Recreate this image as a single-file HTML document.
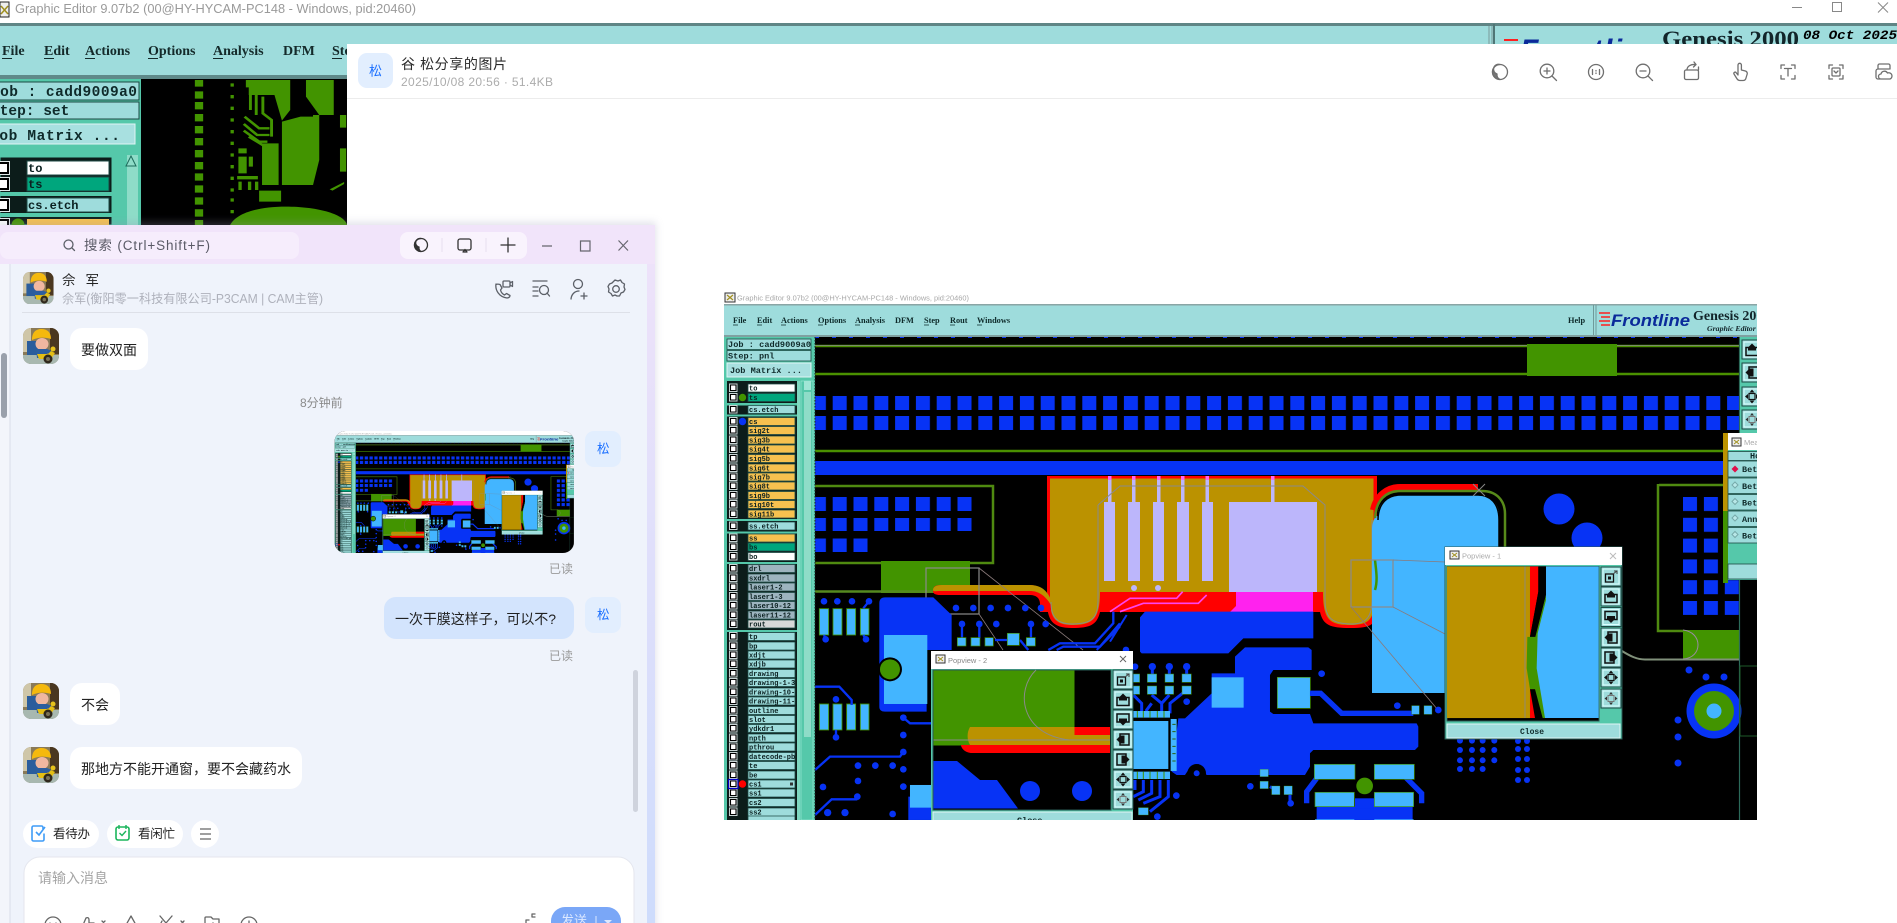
<!DOCTYPE html>
<html lang="zh"><head><meta charset="utf-8"><title>Screenshot</title>
<style>
html,body{margin:0;padding:0;background:#fff;width:1897px;height:923px;overflow:hidden}
svg{display:block}
.s{font-family:"Liberation Sans","Noto Sans CJK SC",sans-serif}
.m{font-family:"Liberation Mono",monospace;font-weight:700}
.f{font-family:"Liberation Serif",serif;font-weight:700}
.ic{fill:none;stroke:#5c6068;stroke-width:1.3;stroke-linecap:round;stroke-linejoin:round}
.vi{fill:none;stroke:#6f6f6f;stroke-width:1.3;stroke-linecap:round;stroke-linejoin:round}
</style></head><body>
<svg xmlns="http://www.w3.org/2000/svg" width="1897" height="923" viewBox="0 0 1897 923">
<defs>
<clipPath id="shotclip"><rect x="723" y="285" width="1034" height="535"/></clipPath>
<clipPath id="thumbclip"><rect x="334.5" y="431" width="239.500" height="122" rx="11"/></clipPath>
<clipPath id="avclip"><rect width="36" height="36" rx="8"/></clipPath>
<clipPath id="chatclip"><rect x="0" y="225" width="660" height="698"/></clipPath>
<clipPath id="tlclip"><rect x="0" y="0" width="1897" height="225"/></clipPath>
<pattern id="sq1" patternUnits="userSpaceOnUse" x="811.9" y="396" width="20.8" height="20"><rect width="14" height="14" fill="#0733f5"/></pattern>
<pattern id="sq2" patternUnits="userSpaceOnUse" x="811.9" y="497" width="20.8" height="20.500"><rect width="14" height="14" fill="#0733f5"/></pattern>
<pattern id="sq3" patternUnits="userSpaceOnUse" x="1683" y="497" width="20.9" height="20.8"><rect width="14" height="14" fill="#0733f5"/></pattern>
<linearGradient id="lil" x1="0" x2="1" y1="0" y2="0"><stop offset="0" stop-color="#f5ecfb"/><stop offset="1" stop-color="#efe2fa"/></linearGradient>
<linearGradient id="edge" x1="0" x2="0" y1="0" y2="1"><stop offset="0" stop-color="#efe2fa"/><stop offset="1" stop-color="#cedcfc"/></linearGradient>
<filter id="sh" x="-5%" y="-5%" width="110%" height="110%"><feGaussianBlur stdDeviation="4"/></filter>

<g id="av">
 <g clip-path="url(#avclip)">
  <rect width="36" height="36" fill="#8a7a58"/>
  <rect x="0" y="0" width="8" height="24" fill="#cfc6a8"/>
  <rect x="27" y="0" width="9" height="26" fill="#4a3720"/>
  <rect x="0" y="27" width="36" height="9" fill="#a8b8b0"/>
  <rect x="4" y="13" width="11" height="14" fill="#2b5d9c"/>
  <ellipse cx="19" cy="16" rx="6.500" ry="6" fill="#f0b7a0"/>
  <path d="M9 12C9 4 13 1 18.500 1S28 4 28 11c-6-2-13-2-19 1z" fill="#f5b90e"/>
  <path d="M13 21h11l5 2-2 3-3-1v5H14z" fill="#2c5e9e"/>
  <path d="M14 26h11l3-3 4 2-4 6H16z" fill="#e4be14"/>
  <circle cx="25" cy="31" r="4.500" fill="#2f281c"/><circle cx="25" cy="31" r="2" fill="#7a7258"/>
  <circle cx="30" cy="21" r="2.500" fill="#e6c21c"/>
 </g>
</g>

<g id="b1"><rect width="20" height="19" fill="#9edcdc" stroke="#1d4a44"/><rect x="2" y="2" width="16" height="15" fill="none" stroke="#dff"/><rect x="4.500" y="7" width="8" height="8" fill="none" stroke="#111" stroke-width="1.300"/><rect x="7" y="9.500" width="3" height="3" fill="#111"/><path d="M12 7l4-3M13 4h3v3" fill="none" stroke="#444"/></g>
<g id="b2"><rect width="20" height="19" fill="#9edcdc" stroke="#1d4a44"/><rect x="2" y="2" width="16" height="15" fill="none" stroke="#dff"/><rect x="4" y="7.500" width="12" height="8" fill="none" stroke="#111" stroke-width="1.500"/><path d="M10 3.500l4 4v3H6v-3z" fill="#111"/></g>
<g id="b3"><rect width="20" height="19" fill="#9edcdc" stroke="#1d4a44"/><rect x="2" y="2" width="16" height="15" fill="none" stroke="#dff"/><rect x="4" y="4" width="12" height="8" fill="none" stroke="#111" stroke-width="1.500"/><path d="M10 15.500l-4-4v-3h8v3z" fill="#111"/></g>
<g id="b4"><rect width="20" height="19" fill="#9edcdc" stroke="#1d4a44"/><rect x="2" y="2" width="16" height="15" fill="none" stroke="#dff"/><rect x="7" y="4" width="9" height="11" fill="none" stroke="#111" stroke-width="1.500"/><path d="M3.500 9.500l4-4h4v8h-4z" fill="#111"/></g>
<g id="b5"><rect width="20" height="19" fill="#9edcdc" stroke="#1d4a44"/><rect x="2" y="2" width="16" height="15" fill="none" stroke="#dff"/><rect x="4" y="4" width="9" height="11" fill="none" stroke="#111" stroke-width="1.500"/><path d="M16.500 9.500l-4-4h-4v8h4z" fill="#111"/></g>
<g id="b6"><rect width="20" height="19" fill="#9edcdc" stroke="#1d4a44"/><rect x="2" y="2" width="16" height="15" fill="none" stroke="#dff"/><rect x="7" y="6.500" width="6" height="6" fill="none" stroke="#111" stroke-width="1.200"/><path d="M10 2.500l2.500 3h-5zM10 16.500l2.500-3h-5zM3 9.500l3-2.500v5zM17 9.500l-3-2.500v5z" fill="#111"/></g>
<g id="b7"><rect width="20" height="19" fill="#9edcdc" stroke="#1d4a44"/><rect x="2" y="2" width="16" height="15" fill="none" stroke="#dff"/><rect x="7" y="6.500" width="6" height="6" fill="none" stroke="#777"/><path d="M10 3l2 2.500h-4zM10 16l2-2.500H8zM3.500 9.500l2.500-2v4zM16.500 9.500l-2.500-2v4z" fill="#333"/></g>

<path id="cb" d="M730.500 385h5.500v5.500h-5.500zM730.500 394.500h5.500v5.500h-5.500zM730.500 406.500h5.500v5.500h-5.500zM730.500 418.500h5.500v5.500h-5.500zM730.500 427.500h5.500v5.500h-5.500zM730.500 437h5.500v5.500h-5.500zM730.500 446h5.500v5.500h-5.500zM730.500 455.500h5.500v5.500h-5.500zM730.500 465h5.500v5.500h-5.500zM730.500 474h5.500v5.500h-5.500zM730.500 483h5.500v5.500h-5.500zM730.500 492.500h5.500v5.500h-5.500zM730.500 501.500h5.500v5.500h-5.500zM730.500 511h5.500v5.500h-5.500zM730.500 523h5.500v5.500h-5.500zM730.500 535h5.500v5.500h-5.500zM730.500 544h5.500v5.500h-5.500zM730.500 553.500h5.500v5.500h-5.500zM730.500 565.500h5.500v5.500h-5.500zM730.500 575h5.500v5.500h-5.500zM730.500 584h5.500v5.500h-5.500zM730.500 593.500h5.500v5.500h-5.500zM730.500 602.500h5.500v5.500h-5.500zM730.500 612h5.500v5.500h-5.500zM730.500 621h5.500v5.500h-5.500zM730.500 633.500h5.500v5.500h-5.500zM730.500 643h5.500v5.500h-5.500zM730.500 652h5.500v5.500h-5.500zM730.500 661h5.500v5.500h-5.500zM730.500 670.500h5.500v5.500h-5.500zM730.500 679.500h5.500v5.500h-5.500zM730.500 689h5.500v5.500h-5.500zM730.500 698h5.500v5.500h-5.500zM730.500 707.500h5.500v5.500h-5.500zM730.500 716.500h5.500v5.500h-5.500zM730.500 725.500h5.500v5.500h-5.500zM730.500 735h5.500v5.500h-5.500zM730.500 744h5.500v5.500h-5.500zM730.500 753.500h5.500v5.500h-5.500zM730.500 762.500h5.500v5.500h-5.500zM730.500 772h5.500v5.500h-5.500zM730.500 781h5.500v5.500h-5.500zM730.500 790h5.500v5.500h-5.500zM730.500 799.500h5.500v5.500h-5.500zM730.500 809h5.500v5.500h-5.500z"/>

<!-- ================= central screenshot ================= -->
<g id="shot">
 <rect x="723" y="285" width="1034" height="535" fill="#fff"/>
 <rect x="725" y="293" width="10" height="9" fill="#eee" stroke="#333"/><path d="M727 295l6 5M733 295l-6 5" stroke="#a09020" stroke-width="1.200"/>
 <text class="s" x="737" y="300.500" font-size="7.500" fill="#a8a8a8" textLength="232" lengthAdjust="spacingAndGlyphs">Graphic Editor 9.07b2 (00@HY-HYCAM-PC148 - Windows, pid:20460)</text>
 <rect x="724" y="304" width="1033" height="516" fill="#000"/>
 <rect x="724" y="304" width="1033" height="32" fill="#9edcdc"/>
 <rect x="724" y="304" width="1033" height="1.500" fill="#8aa5a5"/><rect x="724" y="335" width="1033" height="2" fill="#7fa0a0"/>
 <g class="f" font-size="8.300" fill="#0d2a2a">
  <text x="733" y="323">File</text><text x="757" y="323">Edit</text><text x="781" y="323">Actions</text><text x="818" y="323">Options</text><text x="855" y="323">Analysis</text><text x="895" y="323">DFM</text><text x="924" y="323">Step</text><text x="950" y="323">Rout</text><text x="977" y="323">Windows</text>
  <text x="1568" y="323">Help</text>
 </g>
 <path d="M733 325h5M757 325h5M781 325h5M818 325h5M855 325h5M924 325h5M950 325h5M977 325h5" stroke="#0d2a2a" stroke-width=".8"/>
 <path d="M1593.500 305v30M1596 305v30" stroke="#6f9a9a" fill="none"/>
 <path d="M1599 313h11M1601 317h9M1599 321h11M1601 325h9" stroke="#ff2020" stroke-width="1.500"/>
 <text x="1611" y="326" font-family="Liberation Sans,sans-serif" font-weight="700" font-style="italic" font-size="17" fill="#0a2a9a" textLength="79" lengthAdjust="spacingAndGlyphs">Frontline</text>
 <text class="f" x="1693" y="320" font-size="14" fill="#12252a">Genesis 2000</text>
 <text class="f" x="1707" y="331" font-size="7.800" font-style="italic" fill="#12252a">Graphic Editor</text>

 <!-- PCB canvas -->
 <path d="M815 337.500H1740" stroke="#0733f5" stroke-width="1" stroke-dasharray="4 13"/>
 <path d="M815 346H1740M815 374H1740" stroke="#4a9000" stroke-width="2.500"/>
 <path d="M815 345.500H1740" stroke="#8a8a8a" stroke-width=".7"/>
 <rect x="1527" y="344" width="90" height="32" fill="#429400"/>
 <rect x="815" y="396" width="925" height="34" fill="url(#sq1)"/>
 <path d="M815 451H1740" stroke="#4a9000" stroke-width="2.500"/>
 <rect x="815" y="461" width="908" height="14" fill="#0733f5"/>

 <!-- left green box -->
 <path d="M815 486H993V563H815" fill="none" stroke="#4f8a10" stroke-width="2.500"/>
 <rect x="815" y="497" width="158" height="34" fill="url(#sq2)"/>
 <rect x="815" y="538" width="53" height="14" fill="url(#sq2)"/>
 <rect x="881" y="561" width="89" height="32" fill="#429400"/>
 <path d="M815 591.500H1040" stroke="#568a20" stroke-width="2.500"/>

 <!-- gold block -->
 <path d="M1047 476H1377V606C1377 625 1372 628 1350 628 1330 628 1323 625 1320 612H1100C1097 625 1090 628 1072 628 1052 628 1047 620 1047 600z" fill="#ff0000"/>
 <path d="M1050 478.500H1373.500V604C1373.500 620 1368 625 1350 625 1330 625 1323 620 1323 592H1100C1100 620 1092 625 1072 625 1056 625 1050 618 1050 600z" fill="#bb9200"/>
 <path d="M1230 592H1313V612H1230z" fill="#ff22ee"/><path d="M1230 592H1236V606L1230 612z" fill="#ff0000"/>
 <path d="M933 591C933 586 936 585 942 585H1030C1042 585 1051 595 1051 605V612H1040V604C1040 598 1036 595 1030 595H940C936 595 933 594 933 591z" fill="#ff0000"/>
 <path d="M933 590C933 587 936 585 942 585H1030C1042 585 1048 592 1051 600V605C1045 595 1038 591 1030 591H940C936 591 933 592 933 590z" fill="#bb9200"/>
 <path d="M1100 592H1231L1228 600 1218 612H1100z" fill="#ff0000"/>
 <g fill="#bcb6fb">
  <rect x="1104" y="502" width="11" height="79"/><rect x="1128" y="502" width="12" height="79"/><rect x="1153" y="502" width="11" height="79"/><rect x="1177" y="502" width="12" height="79"/><rect x="1202" y="502" width="11" height="79"/>
  <rect x="1229" y="502" width="88" height="90"/>
  <rect x="1108" y="480" width="3.500" height="22"/><rect x="1132" y="480" width="3.500" height="22"/><rect x="1157" y="480" width="3.500" height="22"/><rect x="1181" y="480" width="3.500" height="22"/><rect x="1205.500" y="480" width="3.500" height="22"/><rect x="1271" y="480" width="3.500" height="22"/>
  <circle cx="1134" cy="588" r="3"/><circle cx="1158" cy="588" r="3"/>
 </g>
 <path d="M1108 476h3.500v4h-3.500zM1132 476h3.500v4h-3.500zM1157 476h3.500v4h-3.500zM1181 476h3.500v4h-3.500zM1205.500 476h3.500v4h-3.500zM1271 476h3.500v4h-3.500z" fill="#ff66ee"/>
 <path d="M1098 505L1120 486H1303L1325 505V600C1325 618 1332 624 1352 624 1368 624 1372 614 1372 600V520M1098 505V600C1098 618 1092 624 1072 624 1056 624 1051 616 1051 602" fill="none" stroke="#8a8a8a" stroke-width="1"/>
 <g transform="translate(1110,540) scale(.3333)">
  <path d="M0 215L60 175H200L218 155M30 215L100 190H265L290 165" fill="none" stroke="#ff44ee" stroke-width="5"/>
  <path d="M0 305L50 225M-40 330L30 260" fill="none" stroke="#0733f5" stroke-width="6"/>
  <path d="M90 232L105 215H610V295H400L355 340H95L90 335z" fill="#0733f5"/>
  <path d="M375 350L405 322H595L605 330V390H490L480 405V515L490 522H600L610 550H920L925 560V620L915 630H610L600 640V680L585 705H290L265 672 235 690 225 705H200L185 695 205 535H225L305 460V400H375z" fill="#0733f5"/>
  <circle cx="260" cy="700" r="28" fill="#000"/><circle cx="260" cy="700" r="9" fill="#0733f5"/>
  <rect x="305" y="412" width="96" height="91" fill="#43b5ff"/>
  <rect x="502" y="412" width="99" height="93" fill="#43b5ff" stroke="#429400" stroke-width="2"/>
  <path d="M600 460H632L695 520H910" fill="none" stroke="#0733f5" stroke-width="16"/>
 </g>

 <!-- big light blue pad + outlines -->
 <path d="M1372 693V530C1372 520 1378 510 1378 520V515C1378 503 1388 495 1400 495H1478C1490 495 1499 503 1499 515V560H1445V693z" fill="#43b5ff"/>
 <path d="M1373 510C1376 495 1388 487 1400 487H1478" fill="none" stroke="#ff0000" stroke-width="6"/>
 <path d="M1375 518C1376 500 1386 491 1400 491H1482C1496 491 1505 500 1505 514V550" fill="none" stroke="#578a1a" stroke-width="2.500"/>
 <path d="M1378 520C1378 503 1388 495 1400 495H1478C1490 495 1499 503 1499 520V550" fill="none" stroke="#000" stroke-width="1.500"/>
 <path d="M1473 484l12 12M1485 484l-12 12" stroke="#888"/>
 <path d="M1375 590C1378 580 1376 570 1375 560" stroke="#429400" stroke-width="2.500" fill="none"/>
 <circle cx="1559" cy="509" r="15.500" fill="#0733f5"/><circle cx="1587" cy="538" r="15.500" fill="#0733f5"/>
 <!-- zoom rectangles -->
 <rect x="926" y="568" width="53" height="46" fill="none" stroke="#8a8a8a" stroke-width="1.200"/>
 <rect x="1351" y="560" width="42" height="47" fill="none" stroke="#8a8a8a" stroke-width="1.200"/>
 <path d="M979 568L1083 650M979 614L1003 650M1393 560L1445 562M1393 607L1445 634M1351 607L1438 710" fill="none" stroke="#8a7a7a" stroke-width=".8"/>

 <!-- bottom left blue detail -->
 <g transform="translate(720,540) scale(.3333)">
  <path d="M478 190Q478 172 495 172H640L695 225V330H620V515H495Q478 515 478 500z" fill="#0733f5"/>
  <rect x="492" y="285" width="130" height="207" fill="#43b5ff"/>
  <circle cx="510" cy="388" r="36" fill="#000"/><circle cx="510" cy="388" r="30" fill="#429400"/>
  <g fill="#43b5ff" stroke="#429400" stroke-width="2.500"><rect x="298" y="206" width="28" height="79"/><rect x="339" y="206" width="27" height="79"/><rect x="380" y="206" width="27" height="79"/><rect x="421" y="206" width="26" height="79"/><rect x="298" y="492" width="28" height="78"/><rect x="339" y="492" width="27" height="78"/><rect x="380" y="492" width="27" height="78"/><rect x="421" y="492" width="26" height="78"/></g>
  <g fill="#0733f5"><circle cx="312" cy="184" r="10"/><circle cx="352" cy="184" r="10"/><circle cx="396" cy="184" r="10"/><circle cx="447" cy="184" r="10"/><circle cx="317" cy="298" r="10"/><circle cx="438" cy="298" r="10"/><circle cx="348" cy="478" r="10"/><circle cx="348" cy="592" r="10"/>
  <circle cx="550" cy="533" r="10"/><circle cx="550" cy="585" r="10"/><circle cx="550" cy="636" r="10"/><circle cx="550" cy="688" r="10"/><circle cx="550" cy="740" r="10"/><circle cx="414" cy="677" r="10"/><circle cx="466" cy="677" r="10"/><circle cx="518" cy="677" r="10"/><circle cx="414" cy="723" r="10"/><circle cx="412" cy="770" r="10"/><circle cx="309" cy="741" r="10"/><circle cx="323" cy="818" r="11"/><circle cx="375" cy="818" r="11"/><circle cx="518" cy="822" r="10"/>
  <circle cx="708" cy="204" r="10"/><circle cx="760" cy="204" r="10"/><circle cx="812" cy="204" r="10"/><circle cx="864" cy="204" r="10"/><circle cx="916" cy="204" r="10"/><circle cx="963" cy="204" r="10"/><circle cx="726" cy="252" r="10"/><circle cx="778" cy="252" r="10"/><circle cx="829" cy="252" r="10"/><circle cx="933" cy="252" r="10"/><circle cx="977" cy="252" r="10"/></g>
  <path d="M285 690L330 650H540L550 636M550 533L570 550H640M285 825L335 778H412M285 440H358L395 480V495M447 184L430 205M312 285L317 298M430 285L438 298M348 570V592M726 252V295M778 252V295M933 252V295M825 300H870M900 300L925 330M985 330L1020 310H1125L1180 250V215M1010 330L1030 320H1140L1200 250" fill="none" stroke="#0733f5" stroke-width="7"/>
  <g fill="#43b5ff" stroke="#429400" stroke-width="2"><rect x="712" y="293" width="26" height="25"/><rect x="753" y="293" width="27" height="25"/><rect x="795" y="293" width="25" height="25"/><rect x="919" y="293" width="27" height="25"/><rect x="862" y="280" width="36" height="36"/></g>
  <rect x="565" y="770" width="70" height="70" fill="#0733f5"/><rect x="570" y="735" width="65" height="68" fill="#43b5ff"/>
 </g>

 <!-- centre-bottom detail -->
 <g transform="translate(1110,540) scale(.3333)">
  <g fill="#0733f5"><circle cx="48" cy="330" r="10"/><circle cx="75" cy="380" r="10"/><circle cx="127" cy="380" r="11"/><circle cx="178" cy="380" r="11"/><circle cx="230" cy="380" r="11"/><circle cx="230" cy="485" r="10"/><circle cx="635" cy="401" r="10"/><circle cx="862" cy="497" r="10"/><circle cx="985" cy="510" r="10"/><circle cx="421" cy="739" r="10"/><circle cx="199" cy="767" r="10"/><circle cx="142" cy="830" r="10"/><circle cx="542" cy="790" r="10"/></g>
  <path d="M127 380V405M178 380V405M230 380V405M70 465L95 490V520M125 465L155 490V520M178 465L155 490M230 450L180 490V520M125 490L110 510V520M75 720V750M100 720V755L70 770M125 720V760L85 780M150 720V770L100 790M175 720V770L120 815M540 765V790M480 740L497 750" fill="none" stroke="#0733f5" stroke-width="9"/>
  <g fill="#43b5ff" stroke="#429400" stroke-width="1.500"><rect x="65" y="402" width="24" height="25"/><rect x="112" y="402" width="28" height="25"/><rect x="165" y="402" width="26" height="25"/><rect x="216" y="402" width="28" height="25"/><rect x="65" y="438" width="24" height="25"/><rect x="112" y="438" width="28" height="25"/><rect x="165" y="438" width="26" height="25"/><rect x="216" y="438" width="28" height="25"/></g>
  <rect x="70" y="543" width="105" height="144" fill="#43b5ff"/>
  <path d="M70 513h110v20H70zM70 695h110v22H70z" fill="#43b5ff"/>
  <path d="M82 513v20M100 513v20M120 513v20M142 513v20M162 513v20M82 695v22M100 695v22M120 695v22M142 695v22M162 695v22" stroke="#429400" stroke-width="3"/>
  <rect x="182" y="537" width="18" height="156" fill="#43b5ff"/>
  <path d="M187 553h10M187 575h10M187 597h10M187 619h10M187 641h10M187 663h10" stroke="#2c6010" stroke-width="3"/>
  <path d="M450 688h25v22h-25zM450 724h25v22h-25zM485 738h25v26h-25zM522 738h25v26h-25zM905 497h23v26h-23zM942 497h24v26h-24zM85 803h30v22H85z" fill="#43b5ff" stroke="#429400" stroke-width="1"/>
  <rect x="620" y="800" width="288" height="40" fill="#0733f5"/><rect x="735" y="775" width="58" height="30" fill="#0733f5"/>
  <path d="M590 790V755L620 715M935 790V760L885 710" fill="none" stroke="#0733f5" stroke-width="16"/>
  <g fill="#43b5ff" stroke="#429400" stroke-width="2"><rect x="613" y="673" width="122" height="45"/><rect x="793" y="673" width="120" height="45"/><rect x="615" y="757" width="118" height="43"/><rect x="793" y="757" width="118" height="43"/></g>
  <circle cx="764" cy="738" r="25" fill="#429400"/>
  <rect x="615" y="838" width="118" height="4" fill="#43b5ff"/><rect x="793" y="838" width="118" height="4" fill="#43b5ff"/>
  <g fill="#0733f5"><circle cx="1050" cy="602" r="9"/><circle cx="1086" cy="602" r="9"/><circle cx="1118" cy="602" r="9"/><circle cx="1153" cy="602" r="9"/><circle cx="1050" cy="630" r="9"/><circle cx="1086" cy="630" r="9"/><circle cx="1118" cy="630" r="9"/><circle cx="1153" cy="630" r="9"/><circle cx="1050" cy="661" r="9"/><circle cx="1086" cy="661" r="9"/><circle cx="1118" cy="661" r="9"/><circle cx="1153" cy="661" r="9"/><circle cx="1050" cy="687" r="9"/><circle cx="1086" cy="687" r="9"/><circle cx="1118" cy="687" r="9"/></g>
 </g>

 <!-- right-hand region -->
 <path d="M1659 485H1724M1658 484V631H1683" fill="none" stroke="#4f8a10" stroke-width="2.500"/>
 <rect x="1683" y="497" width="57" height="118" fill="url(#sq3)"/>
 <rect x="1683" y="630" width="57" height="29.500" fill="#429400"/>
 <path d="M1622 651C1630 656 1637 659.500 1645 659.500H1739" fill="none" stroke="#80907a" stroke-width="2"/>
 <path d="M1683 630C1703 632 1703 658 1683 659" fill="none" stroke="#9a8ca0" stroke-width="1"/>
 <circle cx="1714" cy="711" r="27.500" fill="#0733f5"/><circle cx="1714" cy="711" r="20" fill="#429400"/><circle cx="1714" cy="711" r="7.500" fill="#43b5ff"/>
 <g fill="#0733f5"><circle cx="1689" cy="670" r="3.500"/><circle cx="1706" cy="677" r="3.500"/><circle cx="1724" cy="677" r="3.500"/><circle cx="1678" cy="720" r="3.500"/><circle cx="1678" cy="737" r="3.500"/><circle cx="1678" cy="763" r="3.500"/>
 <circle cx="1518" cy="741" r="3"/><circle cx="1527" cy="741" r="3"/><circle cx="1518" cy="749" r="3"/><circle cx="1527" cy="749" r="3"/><circle cx="1518" cy="759" r="3"/><circle cx="1527" cy="759" r="3"/><circle cx="1518" cy="770" r="3"/><circle cx="1527" cy="770" r="3"/><circle cx="1518" cy="780" r="3"/><circle cx="1527" cy="780" r="3"/></g>
 <path d="M1739.500 337V820" stroke="#2c6a5a" stroke-width="1.200"/>
 <rect x="1740" y="666" width="18" height="70" fill="none" stroke="#1e5a2a"/>
 <!-- top right toolbar -->
 <rect x="1740" y="337" width="18" height="96" fill="#55c8aa"/>
 <use href="#b2" x="1742" y="340"/><use href="#b4" x="1742" y="363"/><use href="#b6" x="1742" y="387"/><use href="#b7" x="1742" y="410"/>
 <!-- measure -->
 <rect x="1723" y="433" width="5" height="78" fill="#bb9200"/><rect x="1723" y="511" width="5" height="72" fill="#429400"/>
 <rect x="1728" y="433" width="30" height="17" fill="#fff"/>
 <rect x="1732" y="438" width="9" height="8" fill="#eee" stroke="#333"/><path d="M1734 440l5 4M1739 440l-5 4" stroke="#a09020"/>
 <text class="s" x="1744" y="445" font-size="7.500" fill="#aaa">Mea</text>
 <rect x="1728" y="450" width="30" height="130" fill="#55c8aa"/>
 <g fill="#9edcdc" stroke="#1d4a44" stroke-width=".8"><rect x="1728" y="451.500" width="30" height="9"/><rect x="1728" y="461" width="30" height="16"/><rect x="1728" y="478" width="30" height="15.500"/><rect x="1728" y="494.500" width="30" height="15.500"/><rect x="1728" y="511" width="30" height="15.500"/><rect x="1728" y="527.500" width="30" height="15.500"/><rect x="1728" y="564" width="30" height="15"/></g>
 <path d="M1735 465.500l3.500 3.500-3.500 3.500-3.500-3.500z" fill="#e0104a"/>
 <path d="M1735 482l3 3-3 3-3-3zM1735 498.500l3 3-3 3-3-3zM1735 515l3 3-3 3-3-3zM1735 531.500l3 3-3 3-3-3z" fill="#b8e8e8" stroke="#7aa"/>
 <g class="m" font-size="8.500" fill="#0f2a2a"><text x="1750" y="458.500">Ho</text><text x="1742" y="472">Bet</text><text x="1742" y="489">Bet</text><text x="1742" y="505.500">Bet</text><text x="1742" y="522">Ann</text><text x="1742" y="538.500">Bet</text></g>

 <!-- sidebar -->
 <rect x="724" y="337" width="91" height="483" fill="#55c8aa"/>
 <path d="M815 337V820" stroke="#222" stroke-dasharray="1.500 1.500"/>
 <g fill="#9edcdc" stroke="#1c4a44" stroke-width=".8"><rect x="727" y="339" width="84" height="10.500"/><rect x="727" y="350.500" width="84" height="10.500"/></g>
 <rect x="727" y="363" width="84" height="14" fill="#a8e0e0" stroke="#e0f5f5"/>
 <g class="m" fill="#0f2a2a">
  <text x="728" y="347" font-size="8.600" textLength="83">Job : cadd9009a0</text>
  <text x="728" y="358.500" font-size="8.600">Step: pnl</text>
  <text x="730" y="373" font-size="8.600" textLength="72">Job Matrix ...</text>
 </g>
 <rect x="727" y="381" width="70" height="439" fill="#0c1c1a"/>
 <path d="M727 403h70v2.500h-70zM727 414.500h70v2h-70zM727 519h70v2h-70zM727 531.500h70v2h-70zM727 562h70v2h-70zM727 630h70v2h-70z" fill="#55c8aa"/>
 <rect x="797" y="381" width="3" height="439" fill="#7ed8c0"/>
 <rect x="801" y="381" width="12" height="439" fill="#55c8aa" stroke="#a0ebd8" stroke-width=".6"/>
 <rect x="804" y="381" width="7" height="9" fill="#a0e6d6"/>
 <rect x="804" y="392" width="7" height="345" fill="#8edcc8"/>
 <path d="M748 384h47v8h-47zM748 552.500h47v8h-47z" fill="#fff" stroke="#1c4a44" stroke-width=".8"/>
 <path d="M748 393.500h47v8h-47zM748 543h47v8h-47z" fill="#00a67d" stroke="#1c4a44" stroke-width=".8"/>
 <path d="M748 417.500h47v8h-47zM748 426.500h47v8h-47zM748 436h47v8h-47zM748 445h47v8h-47zM748 454.500h47v8h-47zM748 464h47v8h-47zM748 473h47v8h-47zM748 482h47v8h-47zM748 491.500h47v8h-47zM748 500.500h47v8h-47zM748 510h47v8h-47zM748 534h47v8h-47z" fill="#f7c14f" stroke="#1c4a44" stroke-width=".8"/>
 <path d="M748 564.500h47v8h-47zM748 574h47v8h-47zM748 583h47v8h-47zM748 592.500h47v8h-47zM748 601.500h47v8h-47zM748 611h47v8h-47z" fill="#9db4bf" stroke="#1c4a44" stroke-width=".8"/>
 <path d="M748 620h47v8h-47z" fill="#d8d8d8" stroke="#1c4a44" stroke-width=".8"/>
 <path d="M748 405.500h47v8h-47zM748 522h47v8h-47zM748 632.500h47v8h-47zM748 642h47v8h-47zM748 651h47v8h-47zM748 660h47v8h-47zM748 669.500h47v8h-47zM748 678.500h47v8h-47zM748 688h47v8h-47zM748 697h47v8h-47zM748 706.500h47v8h-47zM748 715.500h47v8h-47zM748 724.500h47v8h-47zM748 734h47v8h-47zM748 743h47v8h-47zM748 752.500h47v8h-47zM748 761.500h47v8h-47zM748 771h47v8h-47zM748 780h47v8h-47zM748 789h47v8h-47zM748 798.500h47v8h-47zM748 808h47v8h-47zM748 816h47v8h-47z" fill="#9edcdc" stroke="#1c4a44" stroke-width=".8"/>
 <use href="#cb" fill="#fff" stroke="#c8d4d4" stroke-width="3"/>
 <use href="#cb" fill="#fff" stroke="#000" stroke-width="1.100"/>
 <rect x="728.500" y="779.500" width="9.500" height="9" fill="none" stroke="#0000c8" stroke-width="1.200"/>
 <circle cx="742.500" cy="397.500" r="3.700" fill="#429400"/><circle cx="742.500" cy="421.500" r="3.700" fill="#0733f5"/><circle cx="742.500" cy="784" r="3.700" fill="#ff0000"/>
 <rect x="790" y="782.500" width="3" height="3" fill="#333"/>
 <g class="m" font-size="7" fill="#0b2020">
  <text x="749" y="390.500">to</text><text x="749" y="400">ts</text><text x="749" y="412">cs.etch</text><text x="749" y="424">cs</text><text x="749" y="433">sig2t</text><text x="749" y="442.500">sig3b</text><text x="749" y="451.500">sig4t</text><text x="749" y="461">sig5b</text><text x="749" y="470.500">sig6t</text><text x="749" y="479.500">sig7b</text><text x="749" y="488.500">sig8t</text><text x="749" y="498">sig9b</text><text x="749" y="507">sig10t</text><text x="749" y="516.500">sig11b</text><text x="749" y="528.500">ss.etch</text><text x="749" y="540.500">ss</text><text x="749" y="549.500">bs</text><text x="749" y="559">bo</text><text x="749" y="571">drl</text><text x="749" y="580.500">sxdrl</text><text x="749" y="589.500">laser1-2</text><text x="749" y="599">laser1-3</text><text x="749" y="608">laser10-12</text><text x="749" y="617.500">laser11-12</text><text x="749" y="626.500">rout</text><text x="749" y="639">tp</text><text x="749" y="648.500">bp</text><text x="749" y="657.500">xdjt</text><text x="749" y="666.500">xdjb</text><text x="749" y="676">drawing</text><text x="749" y="685">drawing-1-3</text><text x="749" y="694.500">drawing-10-</text><text x="749" y="703.500">drawing-11-</text><text x="749" y="713">outline</text><text x="749" y="722">slot</text><text x="749" y="731">ydkdr1</text><text x="749" y="740.500">npth</text><text x="749" y="749.500">pthrou</text><text x="749" y="759">datecode-pb</text><text x="749" y="768">te</text><text x="749" y="777.500">be</text><text x="749" y="786.500">cs1</text><text x="749" y="795.500">ss1</text><text x="749" y="805">cs2</text><text x="749" y="814.500">ss2</text>
 </g>

 <!-- popview 2 -->
 <rect x="931" y="651" width="202" height="170" fill="#55c8aa"/>
 <rect x="931" y="651" width="202" height="18" fill="#fff"/>
 <rect x="936" y="655" width="9" height="8" fill="#eee" stroke="#333"/><path d="M938 657l5 4M943 657l-5 4" stroke="#a09020"/>
 <text class="s" x="948" y="663" font-size="7.500" fill="#888">Popview - 2</text>
 <path d="M1120 656l6 6M1126 656l-6 6" stroke="#666" stroke-width="1"/>
 <rect x="933" y="670" width="178" height="140" fill="#000" stroke="#2a5a55"/>
 <rect x="933.500" y="670.500" width="141" height="75" fill="#429400"/>
 <path d="M1110 745H970A18 18 0 0 1 970 727H1110z" fill="#bb9200"/>
 <path d="M1110 753H972C965 753 961 748 961 745H1110z" fill="#ff0000"/>
 <rect x="1074.500" y="727" width="35.500" height="8" fill="#ff0000"/>
 <path d="M933.500 761H957L980 780H997L1018 808.500H933.500z" fill="#0733f5"/>
 <circle cx="1030" cy="791" r="10" fill="#0733f5"/><circle cx="1082" cy="791" r="10" fill="#0733f5"/>
 <path d="M1036 670C1015 690 1020 735 1070 740H1110M933.500 740H1070" fill="none" stroke="#8a8a8a" stroke-width="1"/>
 <use href="#b1" x="1113" y="670"/><use href="#b2" x="1113" y="690"/><use href="#b3" x="1113" y="710"/><use href="#b4" x="1113" y="730"/><use href="#b5" x="1113" y="750"/><use href="#b6" x="1113" y="770"/><use href="#b7" x="1113" y="790"/>
 <rect x="933" y="812" width="199" height="10" fill="#9edcdc" stroke="#e0f5f5"/>
 <text class="m" x="1017" y="823" font-size="8.500" fill="#0f2a2a">Close</text>

 <!-- popview 1 -->
 <rect x="1445" y="547" width="177" height="192" fill="#55c8aa" stroke="#2a5a55"/>
 <rect x="1445" y="547" width="177" height="18" fill="#fff"/>
 <rect x="1450" y="551" width="9" height="8" fill="#eee" stroke="#333"/><path d="M1452 553l5 4M1457 553l-5 4" stroke="#a09020"/>
 <text class="s" x="1462" y="558.500" font-size="7.500" fill="#aaa">Popview - 1</text>
 <path d="M1610 553l6 6M1616 553l-6 6" stroke="#bbb" stroke-width="1"/>
 <rect x="1447" y="566.500" width="152" height="154.500" fill="#000" stroke="#2a5a55"/>
 <g transform="translate(1500,285) scale(.3333,.3484)">
  <rect x="-159" y="808" width="249" height="435" fill="#bb9200"/>
  <path d="M90 808H115V880L90 1010zM90 1160H105V1243H90z" fill="#ff0000"/>
  <path d="M115 808H138V880L106 1010H90L115 880zM90 1160H105L128 1243H105z" fill="#000"/>
  <path d="M138 808H296V1243H130L107 1100 110 1000 138 890z" fill="#43b5ff"/>
  <path d="M82 1010H106L138 890V905L113 1000 110 1100 135 1243H128L105 1160H90L80 1100z" fill="#429400"/>
  <path d="M75 808V1243" stroke="#8a8a8a" stroke-width="2.500"/>
 </g>
 <use href="#b1" x="1601" y="567"/><use href="#b2" x="1601" y="587"/><use href="#b3" x="1601" y="607.500"/><use href="#b4" x="1601" y="628"/><use href="#b5" x="1601" y="648"/><use href="#b6" x="1601" y="668"/><use href="#b7" x="1601" y="689"/>
 <rect x="1447" y="724" width="173" height="14" fill="#9edcdc" stroke="#e0f5f5"/>
 <text class="m" x="1520" y="734" font-size="8" fill="#0f2a2a">Close</text>
</g>
</defs>

<!-- ================= top-left background window ================= -->
<rect width="1897" height="923" fill="#fff"/>
<rect x="0" y="2" width="9" height="15" fill="#eee" stroke="#222"/><path d="M1 6l7 8M8 6l-7 8" stroke="#a09020" stroke-width="1.500"/>
<text class="s" x="15" y="13" font-size="12.500" fill="#9a9a9a" textLength="401" lengthAdjust="spacingAndGlyphs">Graphic Editor 9.07b2 (00@HY-HYCAM-PC148 - Windows, pid:20460)</text>
<path d="M1792 7.500h10" stroke="#888"/><rect x="1832.500" y="2.500" width="9" height="9" fill="none" stroke="#888"/><path d="M1878 2.500l10 10M1888 2.500l-10 10" stroke="#888"/>
<rect x="0" y="23" width="1897" height="3" fill="#5f8585"/>
<rect x="0" y="26" width="1897" height="50" fill="#9edcdc"/>
<rect x="0" y="75" width="347" height="4" fill="#5f8a8a"/>
<path d="M1489 26v20M1492 26v20" stroke="#7a9a9a" fill="none"/>
<path d="M1494 24v20" stroke="#4f7676" stroke-width="2"/>
<g clip-path="url(#tlclip)">
 <path d="M1504 40h14" stroke="#ff2020" stroke-width="2"/>
 <text x="1520" y="60" font-family="Liberation Sans,sans-serif" font-weight="700" font-style="italic" font-size="30" fill="#0a2a9a" textLength="140">Frontline</text>
 <text class="f" x="1662" y="46" font-size="22.500" fill="#12252a" textLength="137" lengthAdjust="spacingAndGlyphs">Genesis 2000</text>
 <text x="1803" y="39" font-family="Liberation Mono,monospace" font-weight="700" font-style="italic" font-size="13" fill="#000" textLength="94" lengthAdjust="spacingAndGlyphs">08 Oct 2025</text>
 <g class="f" font-size="14" fill="#142a2a">
  <text x="2" y="55">File</text><text x="44" y="55">Edit</text><text x="85" y="55">Actions</text><text x="148" y="55">Options</text><text x="213" y="55">Analysis</text><text x="283" y="55">DFM</text><text x="332" y="55">Step</text>
 </g>
 <path d="M2 58.500h10M44 58.500h10M85 58.500h10M148 58.500h10M213 58.500h10M332 58.500h10" stroke="#142a2a"/>
 <rect x="0" y="79" width="141" height="146" fill="#55c8aa"/>
 <g fill="#9edcdc" stroke="#1c4a44"><rect x="-2" y="82" width="141" height="18"/><rect x="-2" y="102" width="141" height="17"/></g>
 <rect x="-2" y="124" width="137" height="20" fill="#a8e0e0" stroke="#e0f5f5"/>
 <g class="m" font-size="14.500" fill="#0f2a2a"><text x="-9" y="96" textLength="146">Job : cadd9009a0</text><text x="-9" y="115">Step: set</text><text x="-10" y="140" textLength="130">Job Matrix ...</text></g>
 <rect x="0" y="157" width="112" height="68" fill="#0c1c1a" stroke="#55c8aa"/>
 <rect x="114" y="153" width="25" height="72" fill="#55c8aa"/><rect x="127" y="155" width="11" height="70" fill="#8edcc8"/><path d="M131 156l5 10h-10z" fill="#8edcc8" stroke="#1c6a5a"/>
 <rect x="27" y="161" width="82" height="14" fill="#fff" stroke="#1c4a44"/>
 <rect x="27" y="177" width="82" height="14" fill="#00a67d" stroke="#1c4a44"/>
 <rect x="0" y="192" width="112" height="4" fill="#55c8aa"/>
 <rect x="27" y="198" width="82" height="14" fill="#9edcdc" stroke="#1c4a44"/>
 <rect x="0" y="213" width="112" height="4" fill="#55c8aa"/>
 <rect x="27" y="219" width="82" height="8" fill="#f7c14f"/>
 <path d="M-3 163h11v10H-3zM-3 179h11v10H-3zM-3 200h11v10H-3zM-3 220h11v10H-3z" fill="#fff" stroke="#dfe8e8" stroke-width="4"/>
 <path d="M-3 163h11v10H-3zM-3 179h11v10H-3zM-3 200h11v10H-3zM-3 220h11v10H-3z" fill="#fff" stroke="#000" stroke-width="2"/>
 <circle cx="18" cy="225" r="6.500" fill="#429400"/>
 <g class="m" font-size="12" fill="#0b2020"><text x="28" y="172">to</text><text x="28" y="188">ts</text><text x="28" y="209">cs.etch</text></g>
 <rect x="141" y="79" width="206" height="146" fill="#000"/>
 <g transform="scale(.4146,.3333)" fill="#429400">
  <path d="M470 240h20v20h-20zM470 274h20v22h-20zM470 306h20v22h-20zM470 342h20v22h-20zM470 378h20v22h-20zM470 414h20v22h-20zM470 450h20v22h-20zM470 486h20v22h-20zM470 520h20v22h-20zM470 556h20v22h-20zM470 592h20v22h-20zM470 628h20v22h-20zM470 660h20v16h-20z"/>
  <path d="M556 250h8v10h-8zM556 285h8v10h-8zM556 320h8v10h-8zM556 355h8v10h-8zM556 390h8v10h-8zM556 425h8v10h-8zM556 460h8v10h-8zM556 495h8v10h-8zM556 530h8v10h-8zM556 565h8v10h-8zM556 595h8v10h-8zM556 630h8v10h-8z"/>
  <path d="M593 240H700V330L680 362 662 285H600V262H593z"/>
  <path d="M738 240H805V345H770L738 290z"/>
  <path d="M680 365L725 350H755V345H770V480L755 555H680z"/>
  <path d="M632 430H672V555H632z"/>
  <path d="M820 345h15v38h-15zM820 445h15v70h-15z"/>
  <path d="M625 572H678V605H625z"/>
  <path d="M555 675C570 640 620 620 690 620 760 620 830 640 837 675z"/>
  <path d="M795 568l35-22v6l-28 20z"/>
  <g fill="none" stroke="#429400" stroke-width="7">
   <path d="M604 280V330M618 285V345M634 290V340L655 360V410"/>
   <path d="M590 350L625 385H650M588 372L620 405H650M588 392L625 425H645M600 410L640 440"/>
  </g>
  <path d="M575 445h20v15h-20zM575 470h20v50h-20zM600 470h10v30h-10zM572 528h50v10h-50zM575 545h8v25h-8zM598 545h8v25h-8zM615 545h8v25h-8z"/>
 </g>
</g>

<!-- ================= viewer window ================= -->
<rect x="347" y="44" width="1550" height="879" fill="#fff"/>
<rect x="347" y="98" width="1550" height="1" fill="#ececec"/>
<rect x="358" y="53" width="35" height="35" rx="9" fill="#e2eefe"/>
<text class="s" x="369" y="75.500" font-size="13" fill="#1b6fff">松</text>
<text class="s" x="401" y="69" font-size="14" fill="#2a2a2a" textLength="106" xml:space="preserve">谷 松分享的图片</text>
<text class="s" x="401" y="86" font-size="12" fill="#acacac" textLength="152">2025/10/08 20:56 · 51.4KB</text>
<g class="vi">
 <g transform="translate(1500,72)"><circle r="7.500"/><path d="M0-7.500A7.500 7.500 0 0 0 0 7.500A5 5 0 0 1 -3 2A4 4 0 0 1 0-7.500z" fill="#777"/></g>
 <g transform="translate(1547,71)"><circle r="6.800"/><path d="M5 5l4.500 4.500M-3 0h6M0-3v6"/></g>
 <g transform="translate(1596,72)"><circle r="7.500"/><path d="M-3.500-2.500v5M3.500-2.500v5M0-1.500v.5M0 1v.5"/></g>
 <g transform="translate(1643,71)"><circle r="6.800"/><path d="M5 5l4.500 4.500M-3 0h6"/></g>
 <g transform="translate(1692,72)"><rect x="-7.500" y="-2" width="14" height="9.500" rx="1.500"/><path d="M-5-2c0-4 4-6 9-5.500l-2-2.500M4-7.500L1.500-5M6.500-5v3"/></g>
 <g transform="translate(1740,72)"><path d="M-2 3V-7a1.700 1.700 0 0 1 3.400 0v5l4 1c1.500.5 2 1.500 1.800 3L6 6c-.3 1.500-1.500 2.500-3 2.500H0c-1.500 0-2.500-.8-3.200-2L-6 2c-.7-1.200 1-2.500 2-1.500z"/></g>
 <g transform="translate(1788,72)"><path d="M-7-3.500V-7H-3.500M3.500-7H7V-3.500M7 3.500V7H3.500M-3.500 7H-7V3.500M-3.500-3.500H3.500M0-3.500V4"/></g>
 <g transform="translate(1836,72)"><path d="M-7-3.500V-7H-3.500M3.500-7H7V-3.500M7 3.500V7H3.500M-3.500 7H-7V3.500"/><rect x="-4" y="-4" width="8" height="8" rx="1"/><path d="M-2-1l2 2 2-2"/></g>
 <g transform="translate(1884,72)"><path d="M-6-3v-3.500a1.500 1.500 0 0 1 1.500-1.500h9a1.500 1.500 0 0 1 1.500 1.500V-3M-4 7h-2a2 2 0 0 1-2-2v-6a2 2 0 0 1 2-2H5"/><path d="M-3 7a2.500 2.500 0 0 1 0-5 3.500 3.500 0 0 1 6.500-1A3 3 0 0 1 6 7z"/></g>
</g>
<g clip-path="url(#shotclip)"><use href="#shot"/></g>

<!-- ================= chat window ================= -->
<rect x="-5" y="222" width="661" height="710" fill="#9a9ab8" opacity=".28" filter="url(#sh)"/>
<g clip-path="url(#chatclip)">
 <rect x="0" y="225" width="655" height="698" fill="url(#edge)"/>
 <rect x="0" y="225" width="655" height="39" fill="#f1e4fa"/>
 <rect x="0" y="232" width="299" height="27" rx="8" fill="#f6edfc"/>
 <g class="ic" transform="translate(69,245)"><circle cx="-.5" cy="-.5" r="4.500"/><path d="M3 3l2.500 2.500"/></g>
 <text class="s" x="84" y="250" font-size="13.500" fill="#5a5a66" textLength="126">搜索 (Ctrl+Shift+F)</text>
 <rect x="400" y="232" width="127" height="27" rx="8" fill="#f9f3fd"/>
 <path d="M442 238v14M486 238v14" stroke="#e7dff0"/>
 <g class="ic" style="stroke:#333"><circle cx="421" cy="245" r="6.500"/><path d="M421 238.500A6.500 6.500 0 0 0 421 251.500A4.500 4.500 0 0 1 419 247A3.500 3.500 0 0 1 421 238.500z" fill="#333"/>
 <rect x="458" y="239" width="13" height="11" rx="2"/><path d="M463 252l2-2.500 2 2.500z"/><path d="M508 238v14M501 245h14"/></g>
 <path d="M542 246h10M580.500 241h9.500v10h-9.500zM618.500 240.500l9.500 10M628 240.500l-9.500 10" fill="none" stroke="#66666e" stroke-width="1.200"/>
 <!-- body -->
 <rect x="10" y="264" width="637" height="659" fill="#eff3fb"/>
 <rect x="0" y="264" width="10" height="659" fill="#f3f5fb"/><rect x="9.500" y="264" width="1" height="659" fill="#d9dde9"/>
 <rect x="1" y="353" width="6" height="65" rx="3" fill="#9aa0ab"/>
 <g transform="translate(23,272) scale(.85,.89)"><use href="#av"/></g>
 <text class="s" x="62" y="285" font-size="13.500" fill="#222" textLength="37" xml:space="preserve">佘 军</text>
 <text class="s" x="62" y="303" font-size="12.500" fill="#aeb1bb" textLength="261" lengthAdjust="spacingAndGlyphs">佘军(衡阳零一科技有限公司-P3CAM | CAM主管)</text>
 <g class="ic">
  <path d="M496 284c-1 6 3 13 11 14 1.500 0 3-1 3-2.500l-3.500-2-2 1.500c-2-1-3.500-3-4-5l1.500-2-2-3.500c-1.500-.5-3-.5-4 0z"/><rect x="503" y="281" width="7" height="6" rx="1"/><path d="M510 283l2.500-1.500v5L510 285"/>
  <path d="M533 281h14M533 287h5M533 291h5M533 296h5"/><circle cx="544" cy="290" r="4.500"/><path d="M547 293l2.500 3"/>
  <circle cx="578" cy="284" r="4.500"/><path d="M571 299c.5-5 4-8 8-8M581 296h6M584 293v6"/>
  <path d="M615 280l3 1 2.500-1 1.500 2.500 2.500 1.500-.5 3 1 2.500-1.500 2.500-2.500 1-1.500 3H617l-2-1-2.500 1-1.500-2.500-2.500-1.500.5-3-1-2.500 1.500-2.500 2.500-1z"/><circle cx="616" cy="289" r="3.300"/>
 </g>
 <rect x="22" y="312" width="608" height="1" fill="#dde0e8"/>
 <g transform="translate(23,328)"><use href="#av"/></g>
 <rect x="70" y="328" width="78" height="42" rx="12" fill="#fff"/>
 <text class="s" x="81" y="355" font-size="14" fill="#222">要做双面</text>
 <text class="s" x="300" y="407" font-size="12" fill="#8a8a8a">8分钟前</text>
 <g clip-path="url(#thumbclip)"><rect x="334" y="431" width="240" height="122" fill="#000"/><g transform="translate(334.5,431) scale(.2315,.228) translate(-723,-285)"><use href="#shot"/></g></g>
 <rect x="585" y="431" width="36" height="36" rx="9" fill="#e2eefe"/>
 <text class="s" x="597" y="453" font-size="12.500" fill="#1b6fff">松</text>
 <text class="s" x="549" y="573" font-size="12" fill="#9a9a9a">已读</text>
 <rect x="384" y="597" width="190" height="42" rx="12" fill="#d3e4fd"/>
 <text class="s" x="395" y="624" font-size="14" fill="#222" textLength="161">一次干膜这样子，可以不?</text>
 <rect x="585" y="597" width="36" height="36" rx="9" fill="#e2eefe"/>
 <text class="s" x="597" y="619" font-size="12.500" fill="#1b6fff">松</text>
 <text class="s" x="549" y="660" font-size="12" fill="#9a9a9a">已读</text>
 <g transform="translate(23,683)"><use href="#av"/></g>
 <rect x="70" y="683" width="50" height="42" rx="12" fill="#fff"/>
 <text class="s" x="81" y="710" font-size="14" fill="#222">不会</text>
 <g transform="translate(23,747)"><use href="#av"/></g>
 <rect x="70" y="747" width="232" height="42" rx="12" fill="#fff"/>
 <text class="s" x="81" y="774" font-size="14" fill="#222" textLength="210">那地方不能开通窗，要不会藏药水</text>
 <rect x="633" y="670" width="5" height="142" rx="2.500" fill="#cfd3dd"/>
 <!-- chips -->
 <rect x="23" y="820" width="76" height="28" rx="14" fill="#fff"/>
 <rect x="107" y="820" width="76" height="28" rx="14" fill="#fff"/>
 <rect x="191" y="820" width="28" height="28" rx="14" fill="#fff"/>
 <path d="M43 829v-1.500a1.500 1.500 0 0 0-1.500-1.500h-8a1.500 1.500 0 0 0-1.500 1.500v12a1.500 1.500 0 0 0 1.500 1.500h9a1.500 1.500 0 0 0 1.500-1.500v-6" fill="none" stroke="#3f9cf7" stroke-width="1.600"/>
 <path d="M36 832l3 3 6-8" fill="none" stroke="#3f9cf7" stroke-width="1.600"/>
 <text class="s" x="53" y="838" font-size="12.500" fill="#222" textLength="37">看待办</text>
 <rect x="116" y="827" width="13" height="13" rx="2" fill="none" stroke="#1bb55c" stroke-width="1.600"/>
 <path d="M119 825v4M126 825v4M119.500 833l2.500 2.500 4-4.500" fill="none" stroke="#1bb55c" stroke-width="1.400"/>
 <text class="s" x="138" y="838" font-size="12.500" fill="#222" textLength="37">看闲忙</text>
 <path d="M200 829h11M200 834h11M200 839h11" stroke="#666" stroke-width="1.200"/>
 <!-- input -->
 <rect x="24" y="857" width="610" height="90" rx="16" fill="#fff" stroke="#e4e6ee"/>
 <text class="s" x="38" y="883" font-size="14" fill="#a5a5a5">请输入消息</text>
 <g class="ic" style="stroke:#666">
  <circle cx="53" cy="925" r="8"/><path d="M50 923v.1M56 923v.1"/>
  <path d="M80 925h3l3-7c2-1 3 0 3 2v3h5v2" /><path d="M102 921l3 3M105 921l-3 3"/>
  <path d="M126 925l5-9 5 9M138 925h4"/>
  <path d="M160 916l6 7M172 916l-6 7M162 921l-2 4M181 921l3 3M184 921l-3 3"/>
  <path d="M205 924v-6a1 1 0 0 1 1-1h5l2 2h6v5"/><path d="M213 923l-3 3M213 923l3 3"/>
  <circle cx="249" cy="925" r="8"/><path d="M245 925h8M249 921v8"/>
  <path d="M526 923v-3h3M535 914h-3v3l3 0"/>
 </g>
 <rect x="551" y="907" width="70" height="40" rx="14" fill="#7aa7f7"/>
 <text class="s" x="561" y="925" font-size="13" fill="#dce8ff">发送</text>
 <path d="M596 916v10" stroke="#dce8ff"/>
 <path d="M604 920h8l-4 4z" fill="#dce8ff"/>
</g>
</svg>
</body></html>
